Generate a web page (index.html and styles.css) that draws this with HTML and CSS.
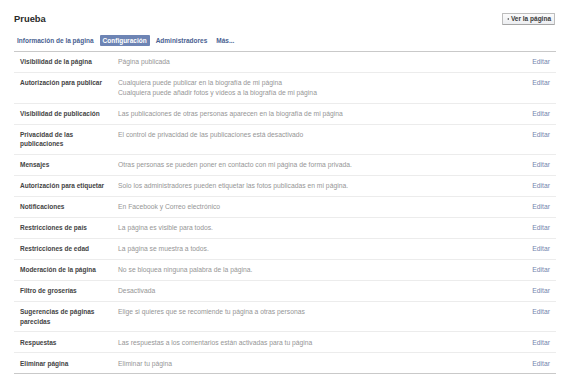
FILE: index.html
```html
<!DOCTYPE html>
<html lang="es">
<head>
<meta charset="utf-8">
<title>Prueba</title>
<link rel="stylesheet" href="styles.css">
</head>
<body>
<div class="page">
  <header class="header">
    <h1 class="title">Prueba</h1>
    <a class="view-btn" href="#"><span class="arrow"></span>Ver la página</a>
  </header>
  <nav class="tabs">
    <a class="tab" href="#">Información de la página</a>
    <a class="tab active" href="#">Configuración</a>
    <a class="tab" href="#">Administradores</a>
    <a class="tab" href="#">Más...</a>
  </nav>
  <div class="settings">
    <div class="row"><div class="label">Visibilidad de la página</div><div class="value">Página publicada</div><a class="edit" href="#">Editar</a></div>
    <div class="row"><div class="label">Autorización para publicar</div><div class="value"><div>Cualquiera puede publicar en la biografía de mi página</div><div>Cualquiera puede añadir fotos y vídeos a la biografía de mi página</div></div><a class="edit" href="#">Editar</a></div>
    <div class="row"><div class="label">Visibilidad de publicación</div><div class="value">Las publicaciones de otras personas aparecen en la biografía de mi página</div><a class="edit" href="#">Editar</a></div>
    <div class="row"><div class="label">Privacidad de las publicaciones</div><div class="value">El control de privacidad de las publicaciones está desactivado</div><a class="edit" href="#">Editar</a></div>
    <div class="row"><div class="label">Mensajes</div><div class="value">Otras personas se pueden poner en contacto con mi página de forma privada.</div><a class="edit" href="#">Editar</a></div>
    <div class="row"><div class="label">Autorización para etiquetar</div><div class="value">Solo los administradores pueden etiquetar las fotos publicadas en mi página.</div><a class="edit" href="#">Editar</a></div>
    <div class="row"><div class="label">Notificaciones</div><div class="value">En Facebook y Correo electrónico</div><a class="edit" href="#">Editar</a></div>
    <div class="row"><div class="label">Restricciones de país</div><div class="value">La página es visible para todos.</div><a class="edit" href="#">Editar</a></div>
    <div class="row"><div class="label">Restricciones de edad</div><div class="value">La página se muestra a todos.</div><a class="edit" href="#">Editar</a></div>
    <div class="row"><div class="label">Moderación de la página</div><div class="value">No se bloquea ninguna palabra de la página.</div><a class="edit" href="#">Editar</a></div>
    <div class="row"><div class="label">Filtro de groserías</div><div class="value">Desactivada</div><a class="edit" href="#">Editar</a></div>
    <div class="row"><div class="label">Sugerencias de páginas parecidas</div><div class="value">Elige si quieres que se recomiende tu página a otras personas</div><a class="edit" href="#">Editar</a></div>
    <div class="row"><div class="label">Respuestas</div><div class="value">Las respuestas a los comentarios están activadas para tu página</div><a class="edit" href="#">Editar</a></div>
    <div class="row"><div class="label">Eliminar página</div><div class="value">Eliminar tu página</div><a class="edit" href="#">Editar</a></div>
  </div>
</div>
</body>
</html>
```
FILE: styles.css
```css
html, body {
  margin: 0;
  padding: 0;
  background: #ffffff;
}
body {
  font-family: "Liberation Sans", Arial, sans-serif;
  font-size: 6.5px;
  color: #333333;
}
.page {
  padding: 13px 13px 0 14px;
}
.header {
  display: flex;
  justify-content: space-between;
  align-items: center;
  height: 12px;
}
.title {
  margin: 0;
  font-size: 9.4px;
  font-weight: bold;
  color: #2a2a2a;
  line-height: 12px;
}
.view-btn {
  display: flex;
  align-items: center;
  gap: 2px;
  height: 10px;
  padding: 0 3px 0 4px;
  margin-right: 1px;
  border: 1px solid #bdbdbd;
  border-bottom-color: #a5a5a5;
  border-radius: 1px;
  background: linear-gradient(#fbfbfb, #eceef1);
  color: #3a3a3a;
  font-weight: bold;
  font-size: 6.5px;
  text-decoration: none;
  line-height: 10px;
}
.arrow {
  width: 0;
  height: 0;
  border-top: 1.6px solid transparent;
  border-bottom: 1.6px solid transparent;
  border-right: 2px solid #555555;
}
.tabs {
  display: flex;
  align-items: center;
  gap: 3px;
  margin-top: 10px;
  height: 11px;
}
.tab {
  padding: 0 3px;
  line-height: 11px;
  font-weight: bold;
  color: #4a5f91;
  text-decoration: none;
  border-radius: 1px;
}
.tab.active {
  background: #6d84b4;
  color: #ffffff;
}
.settings {
  margin-top: 5px;
  border-top: 1px solid #c9c9c9;
  border-bottom: 1px solid #c9c9c9;
}
.row {
  display: grid;
  grid-template-columns: 104px 1fr auto;
  padding: 5.2px 0;
  line-height: 9.6px;
  border-bottom: 1px solid #ececec;
}
.row:last-child {
  border-bottom: none;
}
.label {
  padding: 0 6px 0 6px;
  font-weight: bold;
  color: #444444;
}
.value {
  font-size: 6.75px;
  color: #969696;
}
.edit {
  padding-right: 6px;
  font-size: 6.75px;
  color: #7485ae;
  text-decoration: none;
}
```
